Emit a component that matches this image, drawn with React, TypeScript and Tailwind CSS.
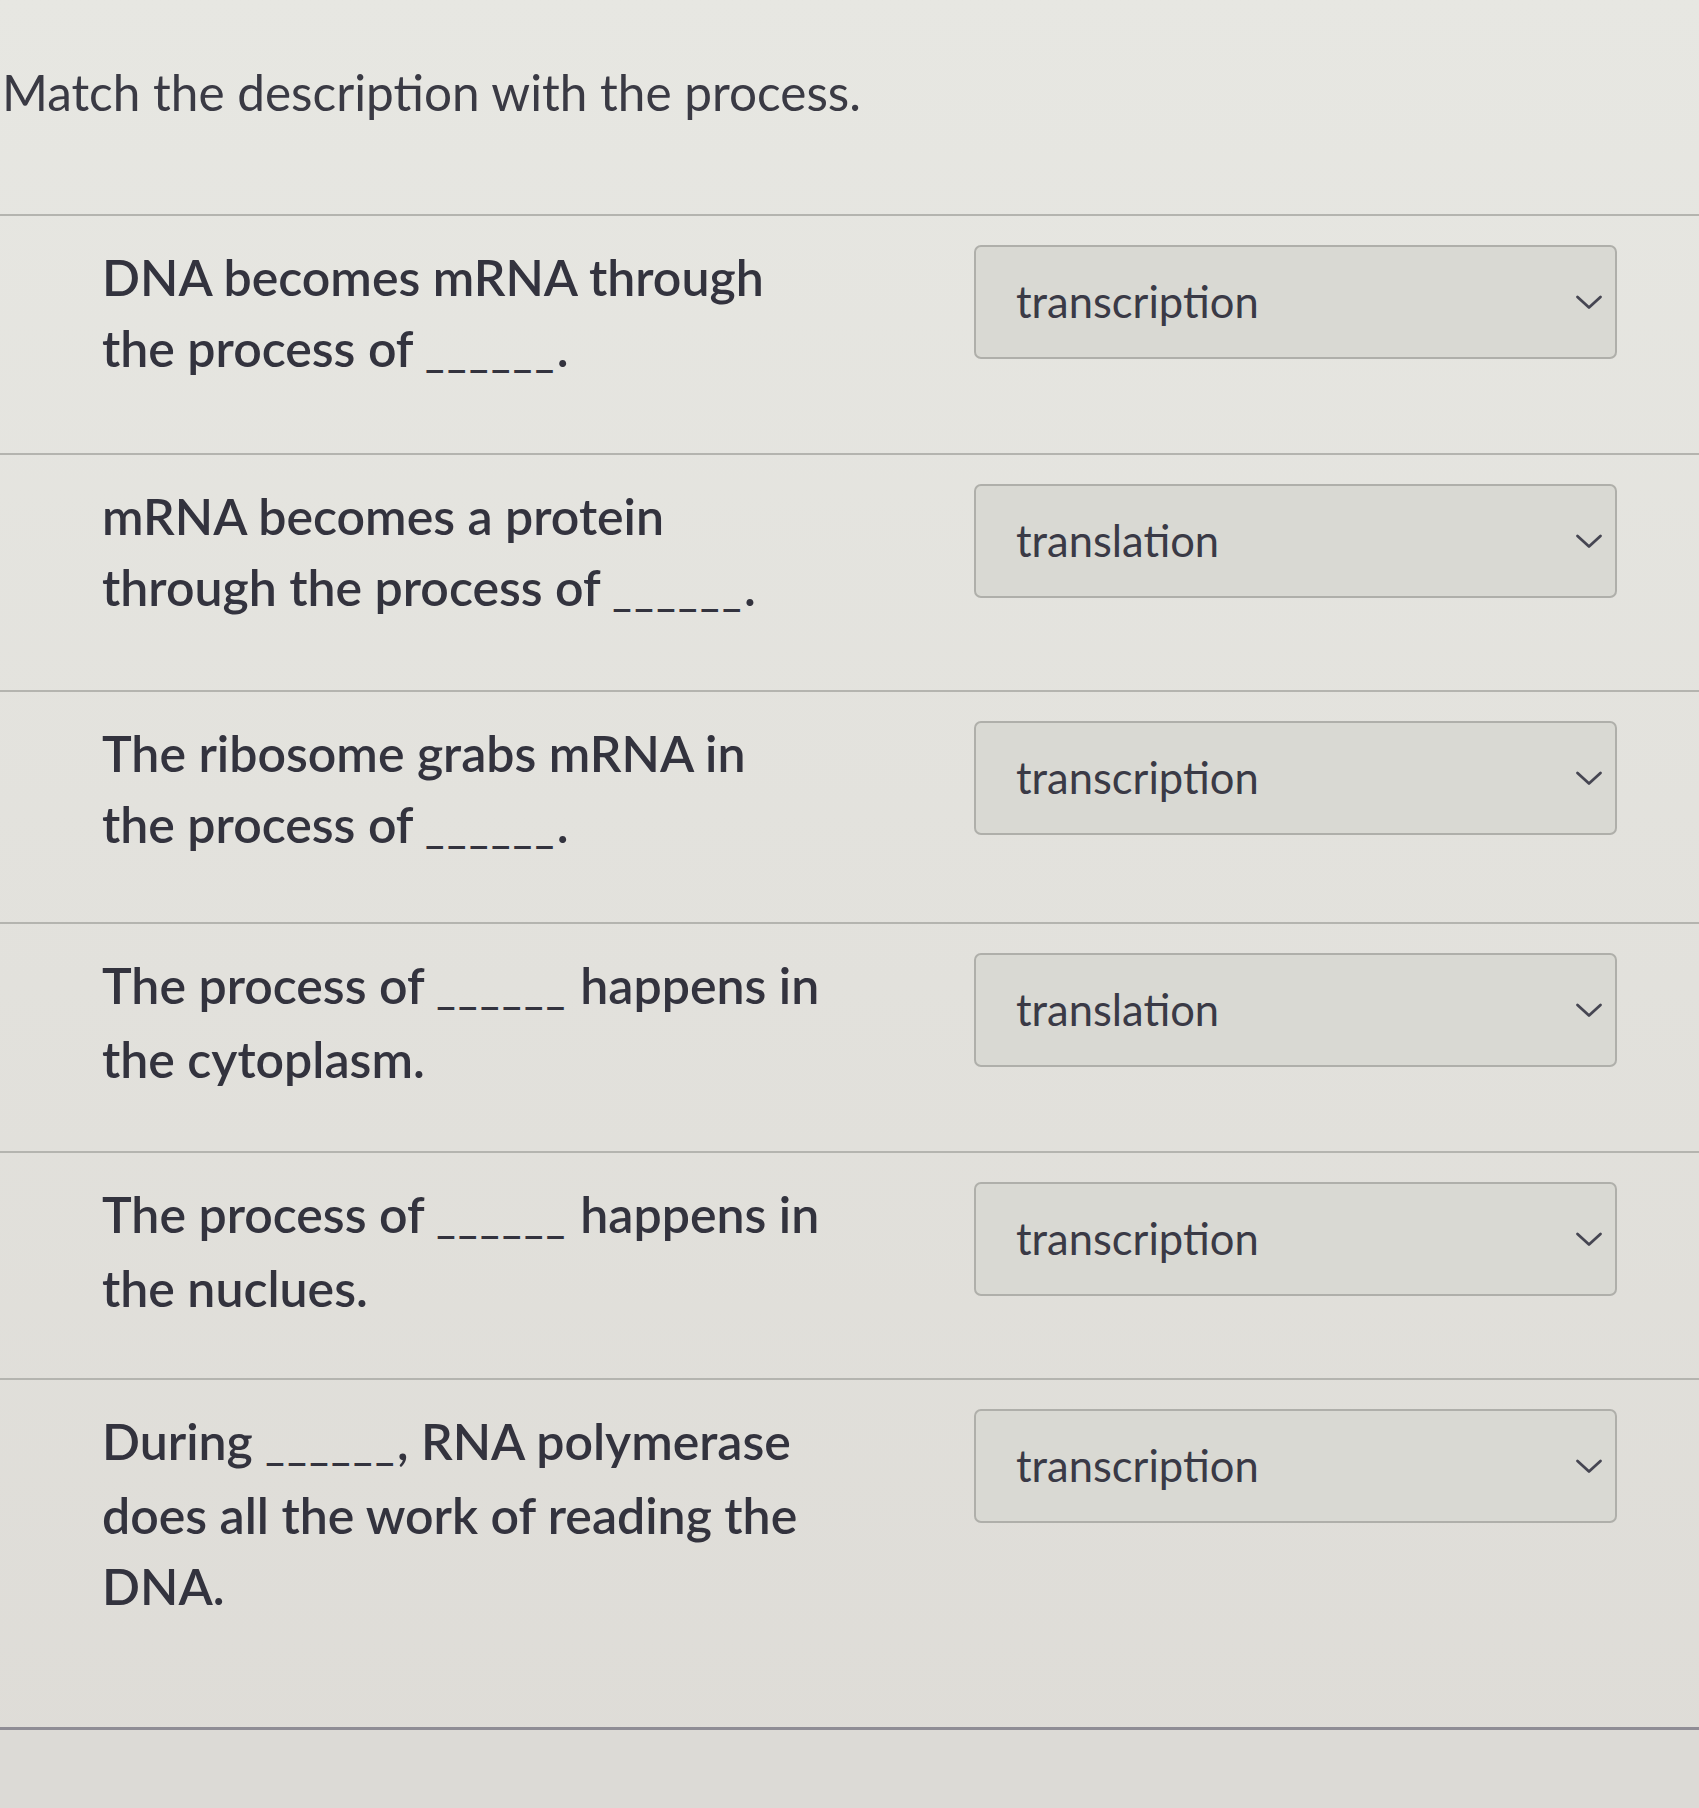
import React from "react";

type Row = { lines: React.ReactNode[]; value: string; h: string };

const Blank = () => <span className="text-[42px] tracking-[2.5px]">______</span>;

const rows: Row[] = [
  { lines: ["DNA becomes mRNA through", <>the process of <Blank />.</>], value: "transcription", h: "h-[239px]" },
  { lines: ["mRNA becomes a protein", <>through the process of <Blank />.</>], value: "translation", h: "h-[237px]" },
  { lines: ["The ribosome grabs mRNA in", <>the process of <Blank />.</>], value: "transcription", h: "h-[232px]" },
  { lines: [<>The process of <Blank /> happens in</>, "the cytoplasm."], value: "translation", h: "h-[229px]" },
  { lines: [<>The process of <Blank /> happens in</>, "the nuclues."], value: "transcription", h: "h-[227px]" },
  { lines: [<>During <Blank />, RNA polymerase</>, "does all the work of reading the", "DNA."], value: "transcription", h: "h-[349px]" },
];

function Chevron() {
  return (
    <svg width="28" height="16" viewBox="0 0 28 16" fill="none" className="shrink-0">
      <path d="M2.5 3 L14 13.5 L25.5 3" stroke="#464652" strokeWidth="2.8" strokeLinecap="round" strokeLinejoin="round" />
    </svg>
  );
}

export default function App() {
  return (
    <div className="w-[1699px] h-[1808px] overflow-hidden bg-gradient-to-b from-[#e7e7e2] to-[#dedcd7] font-['Lato','Noto_Sans',sans-serif] text-[#33333e] flex flex-col">
      <div className="h-[214px] shrink-0 pt-[68px] pl-[2px] text-[49.5px] leading-none text-[#3a3a44]">
        Match the description with the process.
      </div>
      {rows.map((r, i) => (
        <div key={i} className={`flex shrink-0 border-t-2 border-[#b4b4af] pl-[102px] pr-[82px] ${r.h}`}>
          <div className="pt-[26px] text-[50px] leading-[71px] font-semibold whitespace-nowrap">
            {r.lines.map((l, j) => (
              <div key={j}>{l}</div>
            ))}
          </div>
          <div className="ml-auto pt-[29px]">
            <div className="w-[643px] h-[114px] rounded-[7px] border-2 border-[#afafaa] bg-[#d9d9d3] flex items-center pl-[40px] pr-[12px]">
              <span className="text-[43.5px] text-[#3a3a46]">{r.value}</span>
              <span className="ml-auto">
                <Chevron />
              </span>
            </div>
          </div>
        </div>
      ))}
      <div className="flex-1 border-t-[3px] border-[#8f8d95] bg-[#dcdad6]" />
    </div>
  );
}
